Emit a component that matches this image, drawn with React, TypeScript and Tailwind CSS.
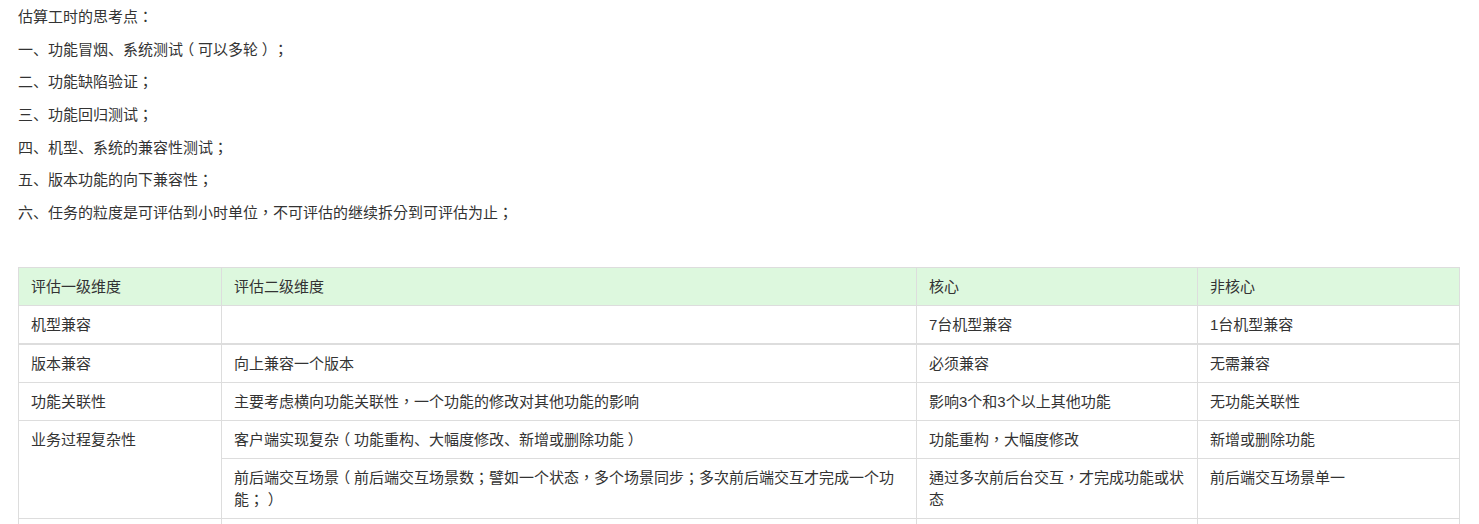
import React from "react";

const lines = [
  "估算工时的思考点：",
  "一、功能冒烟、系统测试（可以多轮）；",
  "二、功能缺陷验证；",
  "三、功能回归测试；",
  "四、机型、系统的兼容性测试；",
  "五、版本功能的向下兼容性；",
  "六、任务的粒度是可评估到小时单位，不可评估的继续拆分到可评估为止；",
];

function T({ s }: { s: string }) {
  const out: React.ReactNode[] = [];
  let buf = "";
  const flush = (k: number) => {
    if (buf) {
      out.push(<React.Fragment key={"t" + k}>{buf}</React.Fragment>);
      buf = "";
    }
  };
  Array.from(s).forEach((ch, i) => {
    if (ch === "、") {
      flush(i);
      out.push(
        <span key={i} className="leading-none font-['Noto_Sans_CJK_SC',sans-serif]">
          、
        </span>
      );
    } else if (ch === "（" || ch === "）") {
      flush(i);
      out.push(
        <span key={i} className="mx-[3.75px] leading-none [font-feature-settings:'halt']">
          {ch}
        </span>
      );
    } else {
      buf += ch;
    }
  });
  flush(s.length);
  return <>{out}</>;
}

const td = "border border-[#dddddd] px-[12px] pt-[8px] pb-[7px] align-top leading-[22px]";

export default function App() {
  return (
    <div
      className="min-h-[524px] bg-white text-[#333333] text-[15px] pl-[18px] pt-[6px]"
      style={{ fontFamily: '"Liberation Sans", "Noto Sans CJK TC", "Noto Sans CJK SC", sans-serif' }}
    >
      <div className="flex flex-col gap-[10.2px]">
        {lines.map((l) => (
          <p key={l} className="leading-[22.5px]">
            <T s={l} />
          </p>
        ))}
      </div>
      <table className="mt-[42px] w-[1441px] table-fixed border-collapse">
        <colgroup>
          <col className="w-[203px]" />
          <col className="w-[695px]" />
          <col className="w-[281px]" />
          <col className="w-[262px]" />
        </colgroup>
        <thead>
          <tr className="bg-[#ddf8de]">
            <td className={td}>评估一级维度</td>
            <td className={td}>评估二级维度</td>
            <td className={td}>核心</td>
            <td className={td}>非核心</td>
          </tr>
        </thead>
        <tbody>
          <tr>
            <td className={td + " border-b-2"}>机型兼容</td>
            <td className={td + " border-b-2"}></td>
            <td className={td + " border-b-2"}>7台机型兼容</td>
            <td className={td + " border-b-2"}>1台机型兼容</td>
          </tr>
          <tr>
            <td className={td}>版本兼容</td>
            <td className={td}>向上兼容一个版本</td>
            <td className={td}>必须兼容</td>
            <td className={td}>无需兼容</td>
          </tr>
          <tr>
            <td className={td}>功能关联性</td>
            <td className={td}>主要考虑横向功能关联性，一个功能的修改对其他功能的影响</td>
            <td className={td}>影响3个和3个以上其他功能</td>
            <td className={td}>无功能关联性</td>
          </tr>
          <tr>
            <td className={td} rowSpan={2}>
              业务过程复杂性
            </td>
            <td className={td}>
              <T s="客户端实现复杂（功能重构、大幅度修改、新增或删除功能）" />
            </td>
            <td className={td}>功能重构，大幅度修改</td>
            <td className={td}>新增或删除功能</td>
          </tr>
          <tr>
            <td className={td}>
              <T s="前后端交互场景（前后端交互场景数；譬如一个状态，多个场景同步；多次前后端交互才完成一个功能；）" />
            </td>
            <td className={td}>通过多次前后台交互，才完成功能或状态</td>
            <td className={td}>前后端交互场景单一</td>
          </tr>
          <tr>
            <td className={td}>&nbsp;</td>
            <td className={td}>&nbsp;</td>
            <td className={td}>&nbsp;</td>
            <td className={td}>&nbsp;</td>
          </tr>
        </tbody>
      </table>
    </div>
  );
}
